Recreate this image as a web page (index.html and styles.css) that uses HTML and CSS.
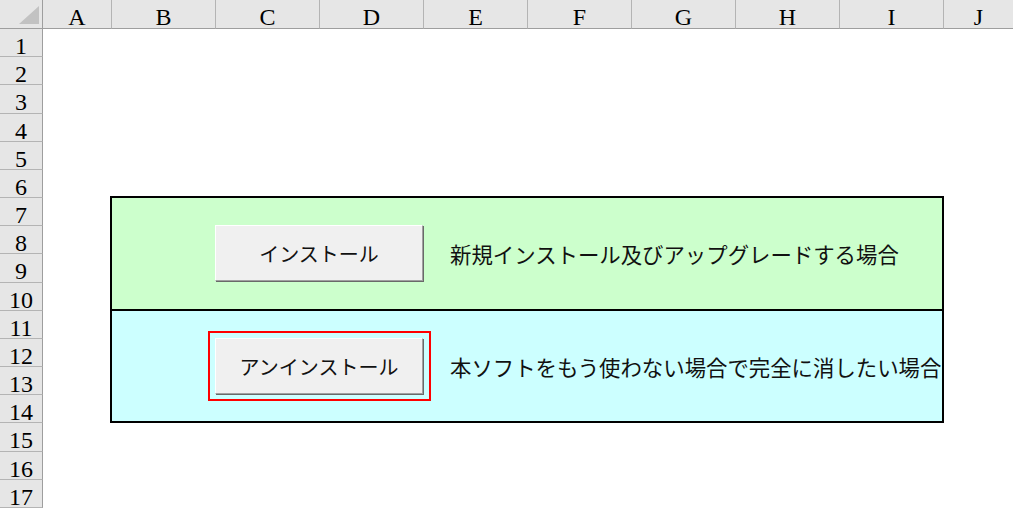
FILE: index.html
```html
<!DOCTYPE html>
<html lang="ja">
<head>
<meta charset="utf-8">
<title>Sheet</title>
<link rel="stylesheet" href="styles.css">
</head>
<body>
<div class="sheet">
  <div class="corner">
    <svg class="tri" width="42" height="28" viewBox="0 0 42 28"><polygon points="39,6 39,24 19,24" fill="#c2c2c2"/></svg>
  </div>
  <div class="colhead">A</div>
  <div class="colhead">B</div>
  <div class="colhead">C</div>
  <div class="colhead">D</div>
  <div class="colhead">E</div>
  <div class="colhead">F</div>
  <div class="colhead">G</div>
  <div class="colhead">H</div>
  <div class="colhead">I</div>
  <div class="colhead last">J</div>

  <div class="rowhead">1</div>
  <div class="rowhead">2</div>
  <div class="rowhead">3</div>
  <div class="rowhead">4</div>
  <div class="rowhead">5</div>
  <div class="rowhead">6</div>
  <div class="rowhead">7</div>
  <div class="rowhead">8</div>
  <div class="rowhead">9</div>
  <div class="rowhead">10</div>
  <div class="rowhead">11</div>
  <div class="rowhead">12</div>
  <div class="rowhead">13</div>
  <div class="rowhead">14</div>
  <div class="rowhead">15</div>
  <div class="rowhead">16</div>
  <div class="rowhead">17</div>

  <div class="box">
    <div class="section install">
      <div class="btn">インストール</div>
      <div class="desc">新規インストール及びアップグレードする場合</div>
    </div>
    <div class="section uninstall">
      <div class="btn highlighted">アンインストール</div>
      <div class="desc">本ソフトをもう使わない場合で完全に消したい場合</div>
    </div>
  </div>
</div>
</body>
</html>
```

FILE: styles.css
```css
html, body {
  margin: 0;
  padding: 0;
  background: #ffffff;
  overflow: hidden;
}

body {
  font-family: "Liberation Serif", "Noto Sans CJK JP", serif;
  color: #000;
}

.sheet {
  display: grid;
  width: 1013px;
  height: 508px;
  grid-template-columns: 43px 69px repeat(8, 104px) 1fr;
  grid-template-rows: 29px repeat(17, 28.18px);
  background: #ffffff;
}

.corner {
  grid-column: 1;
  grid-row: 1;
  background: #e6e6e6;
  border-right: 1px solid #9e9e9e;
  border-bottom: 1px solid #9e9e9e;
  box-sizing: border-box;
}

.tri {
  display: block;
}

.colhead {
  grid-row: 1;
  background: #e6e6e6;
  border-right: 1px solid #b4b4b4;
  border-bottom: 1px solid #9e9e9e;
  box-sizing: border-box;
  text-align: center;
  font-size: 24px;
  line-height: 22px;
  padding-top: 6px;
}

.colhead.last {
  border-right: none;
}

.rowhead {
  grid-column: 1;
  background: #e6e6e6;
  border-right: 1px solid #9e9e9e;
  border-bottom: 1px solid #b4b4b4;
  box-sizing: border-box;
  text-align: center;
  font-size: 24px;
  line-height: 22px;
  padding-top: 6px;
}

.box {
  grid-column: 3 / 11;
  grid-row: 8 / 16;
  margin: -2px 0 0 -2px;
  border: 2px solid #000;
  display: flex;
  flex-direction: column;
  min-height: 0;
}

.section {
  display: grid;
  grid-template-columns: 103px 209px 1fr;
  grid-template-rows: 27px 57px;
  overflow: hidden;
  font-family: "Noto Sans CJK JP", sans-serif;
}

.install {
  height: 111px;
  flex: none;
  background: #ccffcc;
}

.uninstall {
  flex: 1;
  background: #ccffff;
  border-top: 2px solid #000;
}

.btn {
  grid-column: 2;
  grid-row: 2;
  width: 208px;
  height: 56px;
  box-sizing: border-box;
  background: #f0f0f0;
  border-top: 1px solid #ffffff;
  border-left: 1px solid #ffffff;
  border-right: 1px solid #a0a0a0;
  border-bottom: 1px solid #a0a0a0;
  box-shadow: 1px 1px 0 #696969;
  display: flex;
  align-items: center;
  justify-content: center;
  font-size: 20px;
  color: #111;
  position: relative;
}

.highlighted::after {
  content: "";
  position: absolute;
  top: -8px;
  left: -8px;
  right: -9px;
  bottom: -8px;
  border: 2px solid #ff0000;
}

.desc {
  grid-column: 3;
  grid-row: 2;
  align-self: center;
  padding-left: 26px;
  font-size: 21.4px;
  line-height: 1.2;
  white-space: nowrap;
  color: #111;
}
```
